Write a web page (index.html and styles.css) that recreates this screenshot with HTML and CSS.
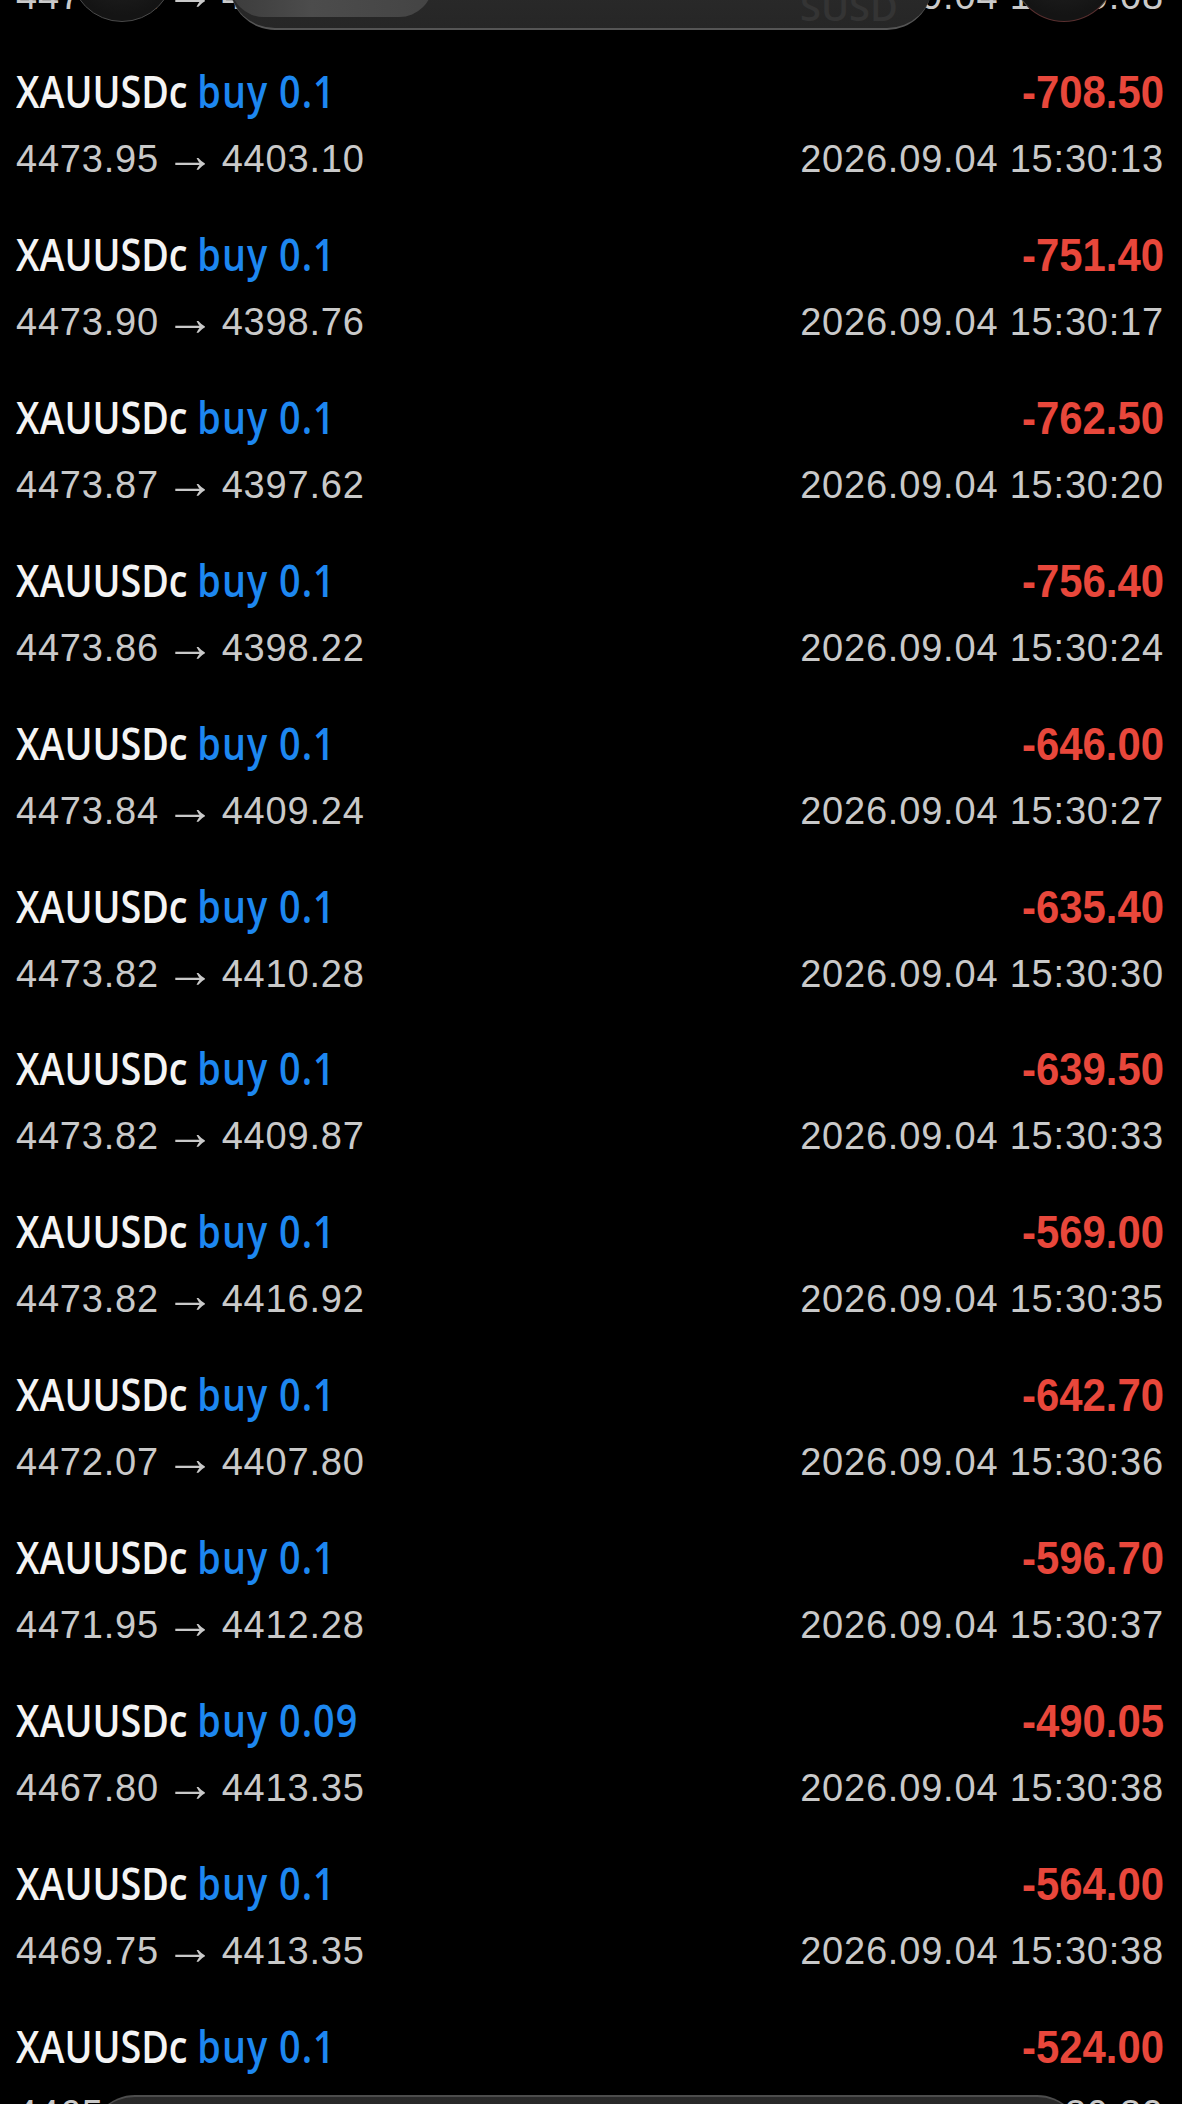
FILE: index.html
```html
<!DOCTYPE html>
<html lang="en">
<head>
  <meta charset="UTF-8" />
  <meta name="viewport" content="width=device-width, initial-scale=1.0"/>
  <title>History</title>
  <link rel="stylesheet" href="styles.css">
</head>
<body>
  <div class="screen">
    <div class="trades">
      <!-- partial row under the top bar -->
      <div class="trade">
        <div class="top-line">
          <span class="title">XAUUSDc <span class="side">buy 0.1</span></span>
          <span class="profit"><span class="num">-702.90</span></span>
        </div>
        <div class="bottom-line"><span class="prices">4474.02 <span class="arrow">→</span> 4403.73</span><span>2026.09.04 15:30:08</span></div>
      </div>

      <div class="trade">
        <div class="top-line">
          <span class="title">XAUUSDc <span class="side">buy 0.1</span></span>
          <span class="profit"><span class="num">-708.50</span></span>
        </div>
        <div class="bottom-line"><span class="prices">4473.95 <span class="arrow">→</span> 4403.10</span><span>2026.09.04 15:30:13</span></div>
      </div>

      <div class="trade">
        <div class="top-line">
          <span class="title">XAUUSDc <span class="side">buy 0.1</span></span>
          <span class="profit"><span class="num">-751.40</span></span>
        </div>
        <div class="bottom-line"><span class="prices">4473.90 <span class="arrow">→</span> 4398.76</span><span>2026.09.04 15:30:17</span></div>
      </div>

      <div class="trade">
        <div class="top-line">
          <span class="title">XAUUSDc <span class="side">buy 0.1</span></span>
          <span class="profit"><span class="num">-762.50</span></span>
        </div>
        <div class="bottom-line"><span class="prices">4473.87 <span class="arrow">→</span> 4397.62</span><span>2026.09.04 15:30:20</span></div>
      </div>

      <div class="trade">
        <div class="top-line">
          <span class="title">XAUUSDc <span class="side">buy 0.1</span></span>
          <span class="profit"><span class="num">-756.40</span></span>
        </div>
        <div class="bottom-line"><span class="prices">4473.86 <span class="arrow">→</span> 4398.22</span><span>2026.09.04 15:30:24</span></div>
      </div>

      <div class="trade">
        <div class="top-line">
          <span class="title">XAUUSDc <span class="side">buy 0.1</span></span>
          <span class="profit"><span class="num">-646.00</span></span>
        </div>
        <div class="bottom-line"><span class="prices">4473.84 <span class="arrow">→</span> 4409.24</span><span>2026.09.04 15:30:27</span></div>
      </div>

      <div class="trade">
        <div class="top-line">
          <span class="title">XAUUSDc <span class="side">buy 0.1</span></span>
          <span class="profit"><span class="num">-635.40</span></span>
        </div>
        <div class="bottom-line"><span class="prices">4473.82 <span class="arrow">→</span> 4410.28</span><span>2026.09.04 15:30:30</span></div>
      </div>

      <div class="trade">
        <div class="top-line">
          <span class="title">XAUUSDc <span class="side">buy 0.1</span></span>
          <span class="profit"><span class="num">-639.50</span></span>
        </div>
        <div class="bottom-line"><span class="prices">4473.82 <span class="arrow">→</span> 4409.87</span><span>2026.09.04 15:30:33</span></div>
      </div>

      <div class="trade">
        <div class="top-line">
          <span class="title">XAUUSDc <span class="side">buy 0.1</span></span>
          <span class="profit"><span class="num">-569.00</span></span>
        </div>
        <div class="bottom-line"><span class="prices">4473.82 <span class="arrow">→</span> 4416.92</span><span>2026.09.04 15:30:35</span></div>
      </div>

      <div class="trade">
        <div class="top-line">
          <span class="title">XAUUSDc <span class="side">buy 0.1</span></span>
          <span class="profit"><span class="num">-642.70</span></span>
        </div>
        <div class="bottom-line"><span class="prices">4472.07 <span class="arrow">→</span> 4407.80</span><span>2026.09.04 15:30:36</span></div>
      </div>

      <div class="trade">
        <div class="top-line">
          <span class="title">XAUUSDc <span class="side">buy 0.1</span></span>
          <span class="profit"><span class="num">-596.70</span></span>
        </div>
        <div class="bottom-line"><span class="prices">4471.95 <span class="arrow">→</span> 4412.28</span><span>2026.09.04 15:30:37</span></div>
      </div>

      <div class="trade">
        <div class="top-line">
          <span class="title">XAUUSDc <span class="side">buy 0.09</span></span>
          <span class="profit"><span class="num">-490.05</span></span>
        </div>
        <div class="bottom-line"><span class="prices">4467.80 <span class="arrow">→</span> 4413.35</span><span>2026.09.04 15:30:38</span></div>
      </div>

      <div class="trade">
        <div class="top-line">
          <span class="title">XAUUSDc <span class="side">buy 0.1</span></span>
          <span class="profit"><span class="num">-564.00</span></span>
        </div>
        <div class="bottom-line"><span class="prices">4469.75 <span class="arrow">→</span> 4413.35</span><span>2026.09.04 15:30:38</span></div>
      </div>

      <div class="trade">
        <div class="top-line">
          <span class="title">XAUUSDc <span class="side">buy 0.1</span></span>
          <span class="profit"><span class="num">-524.00</span></span>
        </div>
        <div class="bottom-line"><span class="prices">4465.00 <span class="arrow">→</span> 4412.76</span><span>2026.09.04 15:30:39</span></div>
      </div>
    </div>

    <!-- floating glass controls, cut off by the screenshot -->
    <div class="glass-circle left"></div>
    <div class="glass-pill">
      <div class="pill-tab"></div>
      <span class="pill-ghost">SUSD</span>
    </div>
    <div class="glass-circle right"></div>

    <div class="bottom-bar"></div>
  </div>
</body>
</html>
```

FILE: styles.css
```css
body {
  margin: 0;
  background: #000;
  font-family: "Liberation Sans", Arial, sans-serif;
}
.screen {
  position: relative;
  height: 2104px;
  overflow: hidden;
}
.trades {
  margin-top: -124.8px;
}
.trade {
  height: 162.9px;
  box-sizing: border-box;
  padding: 24px 18px 0 16px;
}
.top-line {
  display: flex;
  justify-content: space-between;
  align-items: baseline;
  height: 56px;
  line-height: 56px;
}
.title {
  display: inline-block;
  font-family: "Open Sans", sans-serif;
  font-weight: 600;
  font-size: 46px;
  color: #f4f4f4;
  white-space: nowrap;
  transform: scaleX(0.82);
  transform-origin: left center;
}
.side {
  color: #1d87f0;
  letter-spacing: 1.3px;
}
.profit {
  font-size: 46px;
  font-weight: bold;
  color: #e8473b;
}
.profit .num {
  display: inline-block;
  transform: scaleX(0.91);
  transform-origin: right center;
}
.bottom-line {
  display: flex;
  justify-content: space-between;
  margin-top: 19px;
  font-size: 38px;
  line-height: 44px;
  letter-spacing: 0.8px;
  color: #c9c9c9;
}
.prices {
  word-spacing: -5px;
}
.arrow {
  font-size: 50px;
  line-height: 0;
  letter-spacing: 0;
}

/* top floating controls */
.glass-circle {
  position: absolute;
  top: -82px;
  width: 104px;
  height: 104px;
  border-radius: 50%;
  background: radial-gradient(circle at 50% 40%, #262626, #141414 70%);
  border: 1px solid #4a4a4a;
  box-sizing: border-box;
}
.glass-circle.left {
  left: 70px;
}
.glass-circle.right {
  left: 1012px;
  border-bottom-color: #5a3030;
}
.glass-pill {
  position: absolute;
  top: -60px;
  left: 230px;
  width: 702px;
  height: 90px;
  border-radius: 45px;
  background: linear-gradient(#2e2e2e, #262626);
  border-bottom: 2px solid #555;
  box-sizing: border-box;
  overflow: hidden;
}
.pill-tab {
  position: absolute;
  top: 0;
  left: 0;
  width: 203px;
  height: 77px;
  border-radius: 0 0 34px 34px;
  background: linear-gradient(90deg, #3c3c3c, #4c4c4c 40%, #444);
}
.pill-ghost {
  position: absolute;
  left: 570px;
  top: 44px;
  font-family: "Open Sans", sans-serif;
  font-weight: 600;
  font-size: 38px;
  line-height: 44px;
  color: #343434;
}

/* bottom floating bar */
.bottom-bar {
  position: absolute;
  left: 90px;
  top: 2095px;
  width: 992px;
  height: 90px;
  border-radius: 45px;
  background: linear-gradient(#2a2a2a, #1e1e1e);
  border-top: 2px solid #4d4d4d;
  box-sizing: border-box;
}
```
